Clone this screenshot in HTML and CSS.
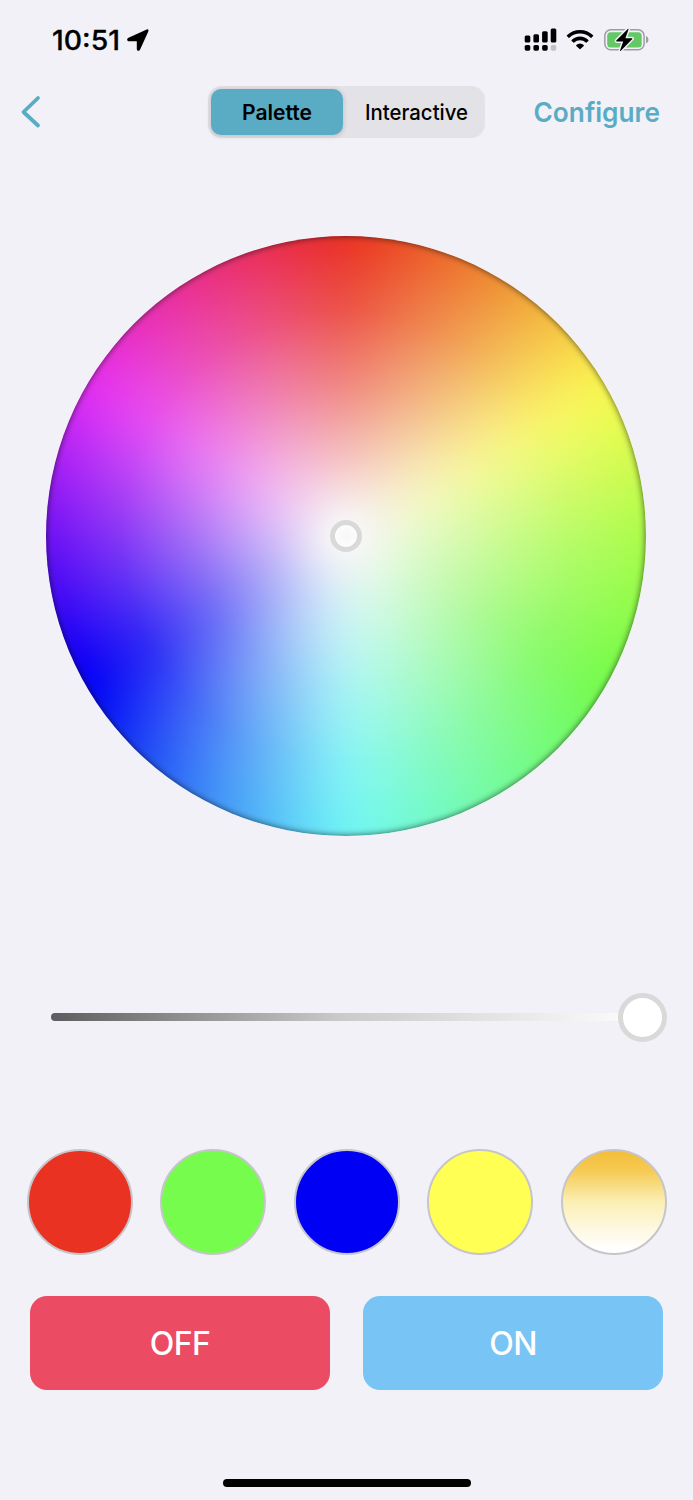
FILE: index.html
```html
<!DOCTYPE html>
<html lang="en">
<head>
<meta charset="utf-8">
<title>Palette</title>
<link rel="stylesheet" href="styles.css">
</head>
<body>
<main class="screen">
  <div class="status">
    <div class="clock">
      <svg class="time" width="68" height="30"><text x="0" y="24.500" textLength="68" lengthAdjust="spacingAndGlyphs">10:51</text></svg>
      <svg class="location" width="22" height="22" viewBox="0 0 22 22"><path d="M19.700.5 1.500 8.800C-.6 9.800-.1 12.300 2 12.300h7.300c.4 0 .5.100.5.500v7.100c0 2.200 2.400 2.700 3.300.7L21.300 2.400C21.900 1 21-.1 19.700.5z"/></svg>
    </div>
    <div class="indicators">
      <svg width="32" height="24" viewBox="0 0 32 24">
        <rect x=".7" y="7.500" width="5.600" height="7" rx="1.500"/><rect x="9.400" y="6.200" width="5.600" height="8.300" rx="1.500"/><rect x="18.100" y="3.300" width="5.600" height="11.200" rx="1.500"/><rect x="26.700" y=".5" width="5.600" height="14" rx="1.500"/>
        <rect x=".7" y="16.900" width="5.600" height="5.900" rx="1.700"/><rect x="9.400" y="16.900" width="5.600" height="5.900" rx="1.700"/><rect x="18.100" y="16.900" width="5.600" height="5.900" rx="1.700"/><rect class="dim" x="26.700" y="16.900" width="5.600" height="5.900" rx="1.700"/>
      </svg>
      <svg class="wifi" width="28" height="22" viewBox="0 0 28 22">
        <path d="M.9 6.200Q.5 6.600.9 7l1.700 1.700q.4.400.8 0Q8 4.500 14 4.500t10.600 4.200q.4.400.8 0L27.100 7q.4-.4 0-.8Q21.500.9 14 .9T.9 6.200z"/>
        <path d="M5.600 11.100q-.4.400 0 .8l1.800 1.700q.4.300.8 0Q10.700 11.200 14 11.200t5.800 2.400q.4.300.8 0l1.800-1.700q.4-.4 0-.8Q18.900 7.600 14 7.600t-8.400 3.500z"/>
        <path d="M10.300 16.100q-.4.400 0 .8l3.300 3.200q.4.400.8 0l3.300-3.200q.4-.4 0-.8-1.600-1.600-3.700-1.600t-3.700 1.600z"/>
      </svg>
      <svg class="battery" width="45" height="24" viewBox="0 0 45 24">
        <rect class="shell" x=".8" y="1.800" width="39.300" height="20" rx="6"/>
        <rect class="charge" x="3.200" y="4.200" width="34.500" height="15.200" rx="3.500"/>
        <path class="tip" d="M42 8v7.500q2.500-.8 2.500-3.750T42 8z"/>
        <path class="bolt" d="M23.800.9 12.300 12.600q-.6.800.4.800h6.500l-3.100 8.800q-.1 1.300.8.500L28.300 11q.6-.8-.4-.8h-6.500l3.100-8.600Q24.700.3 23.800.9z"/>
      </svg>
    </div>
  </div>

  <nav class="nav">
    <button class="back" aria-label="Back"><svg width="20" height="32" viewBox="0 0 20 32"><path d="M17 2 2.500 16 17 29.500"/></svg></button>
    <div class="segments">
      <button class="segment selected"><svg width="70" height="30"><text x="0" y="22.500" textLength="70" lengthAdjust="spacingAndGlyphs">Palette</text></svg></button>
      <button class="segment"><svg width="103" height="30"><text x="0" y="22.500" textLength="103" lengthAdjust="spacingAndGlyphs">Interactive</text></svg></button>
    </div>
    <button class="configure"><svg width="127" height="40"><text x="-.5" y="30" textLength="126.500" lengthAdjust="spacingAndGlyphs">Configure</text></svg></button>
  </nav>

  <div class="wheel"><span class="hues"></span><span class="fade"></span><span class="picker"></span></div>

  <div class="slider"><span class="track"></span><span class="thumb"></span></div>

  <div class="swatches">
    <span class="swatch red"></span>
    <span class="swatch green"></span>
    <span class="swatch blue"></span>
    <span class="swatch yellow"></span>
    <span class="swatch warm"></span>
  </div>

  <div class="actions">
    <button class="action off">OFF</button>
    <button class="action on">ON</button>
  </div>
  <div class="home"></div>
</main>
</body>
</html>
```
FILE: styles.css
```css
* { box-sizing: border-box; }
body { margin: 0; background: #f2f1f7; font-family: Inter, "Liberation Sans", sans-serif; }
button { border: 0; padding: 0; background: none; font: inherit; color: #000; }
svg { display: block; flex: none; overflow: visible; }
.screen { width: 693px; height: 1500px; display: flex; flex-direction: column; }

.status { height: 86px; padding: 25px 44px 0 52px; display: flex; justify-content: space-between; align-items: flex-start; }
.clock { display: flex; align-items: center; gap: 7px; }
.time { font-size: 27.5px; font-weight: 500; stroke: #000; stroke-width: .3px; }
.indicators { display: flex; align-items: center; gap: 10px; padding-top: 3px; }
.dim { fill: #c2c1c6; }
.shell { fill: none; stroke: #9d9da1; stroke-width: 1.5px; }
.charge { fill: #63c965; }
.tip { fill: #a0a0a4; }
.bolt { stroke: #f2f1f7; stroke-width: 3px; paint-order: stroke; stroke-linejoin: round; }

.nav { height: 52px; padding: 0 32px 0 21px; display: grid; grid-template-columns: 187.4px 277px 1fr; align-items: center; }
.back { width: 20px; height: 32px; }
.back path { fill: none; stroke: #5aacc5; stroke-width: 3.8px; stroke-linecap: round; stroke-linejoin: round; }
.segments { height: 52px; padding: 3px; border-radius: 14px; background: #e3e2e7; display: grid; grid-template-columns: 132px 1fr; }
.segment { display: flex; align-items: center; justify-content: center; border-radius: 10px; font-size: 21.5px; font-weight: 500; padding-left: 7px; }
.selected { background: #5aacc5; font-weight: 600; padding-left: 0; box-shadow: 0 1px 4px 1px rgba(0,0,0,.13); }
.configure { justify-self: end; color: #5aacc5; font-size: 27.5px; font-weight: 600; }
.configure text { fill: currentColor; }

.wheel { width: 600px; height: 600px; margin: 97.5px auto 0 46.4px; border-radius: 50%; overflow: hidden; display: grid; grid-template: 600px / 600px; place-items: center; }
.wheel > span { grid-area: 1 / 1; }
.hues {
  width: 720px; height: 720px; margin: -60px; filter: blur(24px);
  background: conic-gradient(#ea3223, #ef8f37 30deg, #fcfa54 60deg, #acfc4e 90deg, #75fb4c 120deg, #76fba0 150deg, #74f8f8 180deg, #3c86f7 210deg, #0000f5 240deg, #7215f5 270deg, #e733f5 300deg, #ea338c 330deg, #ea3223 360deg);
}
.fade {
  z-index: 1; width: 600px; height: 600px; border-radius: 50%;
  background: radial-gradient(closest-side, #f9f9f9 0%, rgba(249,249,249,.94) 7%, rgba(249,249,249,.71) 25%, rgba(249,249,249,.41) 50%, rgba(249,249,249,.15) 75%, rgba(249,249,249,0) 96%);
  box-shadow: inset 0 0 7px rgba(0,0,0,.65);
}
.picker { z-index: 2; width: 32px; height: 32px; border: 5px solid #d9d9d9; border-radius: 50%; background: radial-gradient(#f7f7f7, #fff); }

.slider { height: 48px; margin: 157.5px 26px 0 51px; display: flex; align-items: center; }
.track { flex: 1; height: 8px; margin-right: -4px; border-radius: 4px 0 0 4px; background: linear-gradient(90deg, #5d5d60, #c9c9c9 50%, #fafafa); }
.thumb { width: 49px; height: 49px; border: 5px solid #d9d9d9; border-radius: 50%; background: #fff; }

.swatches { height: 107px; margin: 108px 26.5px 0; display: flex; justify-content: space-between; }
.swatch { width: 106px; height: 106px; border: 2px solid #c6c5ca; border-radius: 50%; }
.red { background: #ea3223; }
.green { background: #75fc4d; }
.blue { background: #0000f5; }
.yellow { background: #ffff54; }
.warm { background: linear-gradient(#f4bd37, #f6cb55 20%, #fbefb5 50%, #fff 96%); }

.actions { height: 94px; margin: 40px 30px 0; display: grid; grid-template-columns: 1fr 1fr; gap: 33px; }
.action { border-radius: 17px; color: #fff; font-size: 32px; font-weight: 500; letter-spacing: -.5px; padding-top: 1px; }
.off { background: #eb4b63; }
.on { background: #77c4f5; }
.home { width: 248px; height: 8px; margin: 89px auto 0; border-radius: 4px; background: #000; }
```
